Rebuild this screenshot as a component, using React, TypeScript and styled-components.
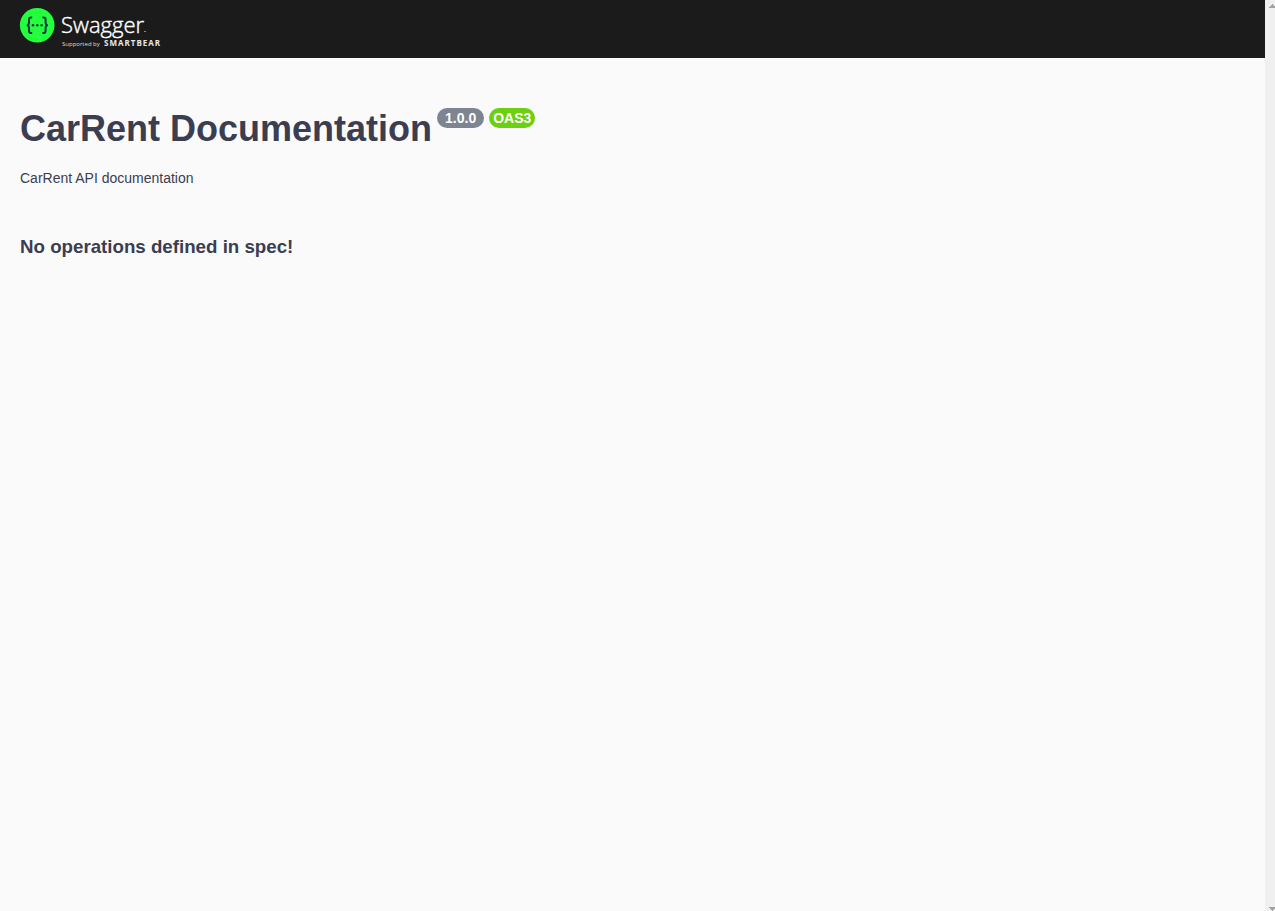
import React from "react";
import styled, { createGlobalStyle } from "styled-components";

const GlobalStyle = createGlobalStyle`
  *, *::before, *::after { box-sizing: border-box; }
  body {
    margin: 0;
    background: #fafafa;
    color: #3b3d51;
    font-family: "Liberation Sans", Arial, sans-serif;
  }
`;

const Page = styled.div`
  display: flex;
  min-height: 100vh;
`;

const Content = styled.div`
  flex: 1;
  min-width: 0;
`;

const Topbar = styled.header`
  display: flex;
  padding: 8px 20px 10px;
  background: #1b1b1b;
`;

const LogoLink = styled.a`
  display: flex;
  color: #ffffff;
  text-decoration: none;
`;

const LogoArt = styled.svg`
  display: block;
  width: 144px;
  height: 40px;
  overflow: visible;
  font-family: "Open Sans", sans-serif;
`;

const Wordmark = styled.text`
  fill: #ffffff;
  stroke: #ffffff;
  stroke-width: 0.4;
  font-size: 22px;
  font-weight: 300;
`;

const Supported = styled.text`
  fill: #dddddd;
  font-size: 6px;
`;

const SmartBear = styled.text`
  fill: #e8e8e8;
  font-size: 8px;
  font-weight: 700;
  letter-spacing: 1px;
`;

const Main = styled.main`
  padding: 50px 20px;
`;

const TitleRow = styled.div`
  display: flex;
  align-items: flex-start;
  gap: 5px;
`;

const Title = styled.h1`
  margin: 0;
  font-size: 36px;
  line-height: 42px;
`;

const Badge = styled.span<{ $tone: string; $pad: number }>`
  padding: 2px ${(p) => p.$pad}px;
  border-radius: 10px;
  background: ${(p) => p.$tone};
  color: #ffffff;
  font-size: 14px;
  font-weight: 700;
  line-height: 16px;
`;

const Description = styled.p`
  margin: 20px 0 50px;
  font-size: 14px;
  line-height: 16px;
`;

const Empty = styled.h3`
  margin: 0;
  line-height: 22px;
`;

const ScrollTrack = styled.div`
  display: flex;
  flex-direction: column;
  justify-content: space-between;
  align-items: flex-end;
  width: 10px;
  padding-top: 4px;
  background: #f0f0f0;
`;

const Arrow = styled.svg`
  display: block;
  width: 6px;
  height: 4px;
  fill: #a3a3a3;
`;

function SwaggerLogo() {
  return (
    <LogoArt viewBox="0 0 144 40" role="img" aria-label="Swagger, supported by SmartBear">
      <circle cx="17.2" cy="17.2" r="17.3" fill="#23ff3c" />
      <g fill="none" stroke="#173647" strokeWidth="2">
        <path d="M12.2 9.4h-1.1q-2.1 0-2.1 2.1v3q0 2.7-2.2 2.7q2.2 0 2.2 2.7v3q0 2.1 2.1 2.1h1.1" />
        <path d="M22.4 9.4h1.1q2.1 0 2.1 2.1v3q0 2.7 2.2 2.7q-2.2 0-2.2 2.7v3q0 2.1-2.1 2.1h-1.1" />
      </g>
      <g fill="#173647">
        <circle cx="13" cy="17.2" r="1.3" />
        <circle cx="17.3" cy="17.2" r="1.3" />
        <circle cx="21.6" cy="17.2" r="1.3" />
      </g>
      <Wordmark x="41" y="25">Swagger</Wordmark>
      <path d="M124 23.5h2" stroke="#888888" strokeWidth="1" />
      <Supported x="42" y="38">Supported by</Supported>
      <SmartBear x="84" y="38">SMARTBEAR</SmartBear>
    </LogoArt>
  );
}

export default function App() {
  return (
    <>
      <GlobalStyle />
      <Page>
        <Content>
          <Topbar>
            <LogoLink href="#">
              <SwaggerLogo />
            </LogoLink>
          </Topbar>
          <Main>
            <TitleRow>
              <Title>CarRent Documentation</Title>
              <Badge $tone="#7d8492" $pad={8}>1.0.0</Badge>
              <Badge $tone="#6bd00f" $pad={4}>OAS3</Badge>
            </TitleRow>
            <Description>CarRent API documentation</Description>
            <Empty>No operations defined in spec!</Empty>
          </Main>
        </Content>
        <ScrollTrack aria-hidden="true">
          <Arrow viewBox="0 0 6 4">
            <path d="M0 4V3h1V2h1V1h1V0h1v1h1v1h1v2z" />
          </Arrow>
          <Arrow viewBox="0 0 6 4">
            <path d="M0 0v1h1v1h1v1h1v1h1V3h1V2h1V0z" />
          </Arrow>
        </ScrollTrack>
      </Page>
    </>
  );
}
